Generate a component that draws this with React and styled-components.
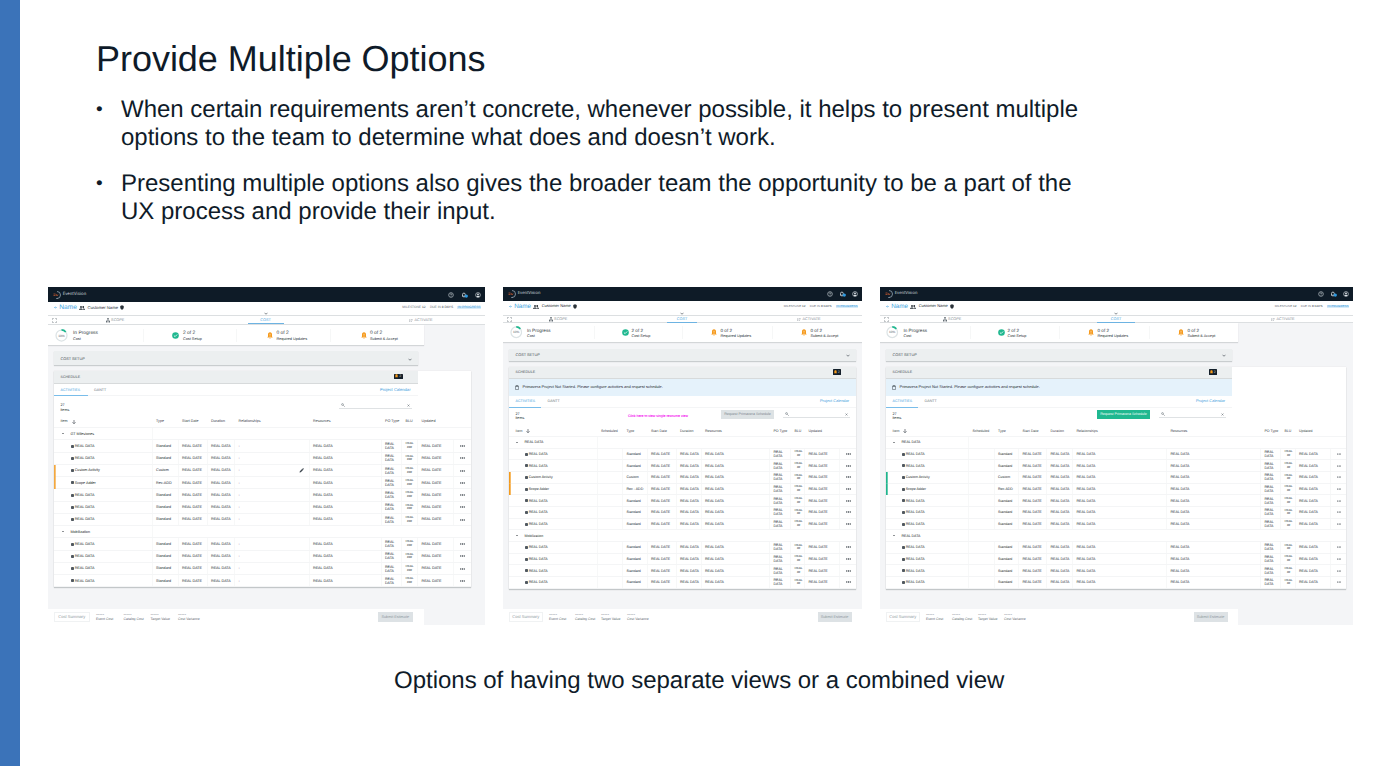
import React from "react";
import styled, { createGlobalStyle, css } from "styled-components";

const Global = createGlobalStyle`
  * { box-sizing: border-box; }
  body { margin: 0; background: #fff; }
`;

const Slide = styled.main`
  display: flex;
  width: 1400px;
  height: 766px;
  overflow: hidden;
  font-family: "Liberation Sans", Arial, sans-serif;
  color: #0f1b29;
  text-rendering: geometricPrecision;
`;
const Accent = styled.div`
  flex: none;
  width: 20px;
  background: #3b73b9;
`;
const Content = styled.div`
  flex: 1;
  display: flex;
  flex-direction: column;
`;
const Title = styled.h1`
  margin: 38px 0 0 76px;
  font-size: 36px;
  font-weight: 400;
  line-height: 42px;
  letter-spacing: -0.03px;
  white-space: nowrap;
`;
const Bullets = styled.ul`
  list-style: none;
  margin: 16px 0 0 76px;
  padding: 0;
  display: grid;
  gap: 18px;
  height: 191px;
  align-content: start;
`;
const Bullet = styled.li`
  display: grid;
  grid-template-columns: 25px 1fr;
  font-size: 24px;
  line-height: 28px;
`;
const Disc = styled.span`
  font-size: 19px;
  line-height: 27px;
`;
const Line = styled.span`
  display: block;
  white-space: nowrap;
  letter-spacing: -0.008px;
`;
const Gallery = styled.section`
  display: flex;
  gap: 18px;
  padding-left: 28px;
  height: 338px;
`;
const Caption = styled.p`
  margin: 42px 0 0 374px;
  font-size: 24px;
  line-height: 28px;
  letter-spacing: -0.012px;
  white-space: nowrap;
`;

/* ---------- application mock-up ---------- */

const Frame = styled.article`
  width: ${(p) => p.$w}px;
  height: 338px;
  background: #f4f5f7;
  color: #232c33;
  font-size: ${(p) => p.$fs}px;
  display: flex;
  flex-direction: column;
  overflow: hidden;
  white-space: nowrap;
  line-height: 1.2;
`;
const TopBar = styled.header`
  height: ${(p) => p.$h}px;
  flex: none;
  background: #0e1b27;
  display: flex;
  align-items: center;
  padding: 0 4.5px 0 5px;
  gap: 2.2px;
  color: #dfe5ea;
`;
const Brand = styled.span`
  font-family: Roboto, sans-serif;
  font-size: ${(p) => p.$fs}px;
  color: #c3cbd2;
  flex: 1;
`;
const TopIcons = styled.div`
  display: flex;
  gap: ${(p) => p.$gap}px;
`;
const NameBar = styled.div`
  height: ${(p) => p.$h}px;
  flex: none;
  background: #fff;
  border-bottom: 1px solid #dcdfe1;
  display: grid;
  grid-template-columns: 1fr 8px 1fr;
  padding: 0 4px;
`;
const NameLeft = styled.div`
  display: flex;
  align-items: center;
  height: 11px;
  gap: 2.3px;
  padding-left: 1.5px;
  svg { flex: none; }
`;
const BigName = styled.span`
  color: #3a9fe0;
  font-size: ${(p) => p.$fs}px;
  margin-left: 0.5px;
`;
const Customer = styled.span`
  color: #20282f;
  font-size: ${(p) => p.$fs}px;
`;
const ChevronSlot = styled.div`
  display: flex;
  align-items: flex-end;
  justify-content: center;
  padding-right: 1px;
`;
const NameRight = styled.div`
  display: flex;
  justify-content: flex-end;
  align-items: center;
  height: 11px;
  gap: 4.3px;
  font-size: ${(p) => p.$fs}px;
  color: #6b747b;
  b { color: #2f383f; font-weight: 400; }
`;
const Progress = styled.span`
  background: #d7ecfa;
  color: #3a9bdb;
  padding: 0 0.5px;
`;
const TabBar = styled.nav`
  height: ${(p) => p.$h}px;
  flex: none;
  background: #fff;
  border-bottom: 1px solid #dcdfe1;
  display: grid;
  grid-template-columns: ${(p) => p.$cols};
  font-size: 3.8px;
  color: #858e95;
`;
const NavTab = styled.div`
  display: flex;
  justify-content: center;
  align-items: center;
  gap: 1.5px;
  padding-top: ${(p) => p.$pt}px;
`;
const NavActive = styled.div`
  justify-self: center;
  width: ${(p) => p.$w}px;
  display: flex;
  align-items: center;
  justify-content: center;
  color: #4ba4dd;
  border-bottom: 1px solid #6db3e2;
  padding-top: ${(p) => p.$pt + 1}px;
`;
const Status = styled.div`
  height: ${(p) => p.$h}px;
  flex: none;
  width: ${(p) => p.$w}px;
  background: #fff;
  box-shadow: 0 1px 1px #d3d6d8;
  display: grid;
  grid-template-columns: ${(p) => p.$cols};
  align-items: center;
`;
const StatusCell = styled.div`
  display: flex;
  align-items: center;
  gap: ${(p) => p.$gap}px;
  padding-left: ${(p) => p.$pad}px;
  height: ${(p) => (p.$first ? 15 : 13)}px;
  ${(p) => !p.$first && css`border-left: 1px solid #f6f7f7;`}
  svg { flex: none; }
`;
const StatusText = styled.div`
  font-size: ${(p) => p.$fs}px;
  line-height: 5.5px;
  padding-top: ${(p) => p.$pt}px;
  color: #343d44;
  small { display: block; font-size: 3.8px; color: #232c33; }
`;
const panel = css`
  width: ${(p) => p.$w}px;
  height: ${(p) => p.$h}px;
  display: flex;
  align-items: center;
  justify-content: space-between;
  background: #eceff0;
  color: #424b51;
  padding-left: 6.5px;
  font-size: ${(p) => p.$fs}px;
`;
const SetupPanel = styled.div`
  ${panel}
  flex: none;
  margin: ${(p) => p.$mt}px 0 ${(p) => p.$mb}px 6px;
  padding-right: 6px;
  padding-top: ${(p) => p.$pt}px;
  box-shadow: 0 1px 1px #c9cdcf;
`;
const ScheduleHead = styled.div`
  ${panel}
  padding-right: 15px;
  border-bottom: 1px solid #d7dadb;
`;
const Badge = styled.span`
  width: 8.5px;
  height: 5.5px;
  margin-bottom: 1px;
  border-radius: 0.5px;
  background: #131f2a;
  display: flex;
  align-items: center;
  justify-content: center;
  gap: 1px;
  color: #c3cad0;
  font-size: 3.5px;
`;
const Card = styled.section`
  flex: none;
  width: ${(p) => p.$w}px;
  margin-left: 6px;
  background: #fff;
  box-shadow: 0 1px 1px #c3c7c9, 0 0 1px #d8dbdd;
`;
const Banner = styled.div`
  width: ${(p) => p.$w}px;
  height: 17px;
  background: #e5f2fb;
  display: flex;
  align-items: center;
  padding-left: 5.5px;
  gap: 4px;
  font-size: 3.96px;
  color: #1f2930;
`;
const SubTabs = styled.div`
  width: ${(p) => p.$w}px;
  height: ${(p) => p.$h}px;
  display: flex;
  border-bottom: 1px solid #f4f5f6;
  font-size: 3.6px;
  color: #6b747b;
`;
const SubTab = styled.span`
  display: flex;
  align-items: center;
  padding: 0 6.5px;
  height: ${(p) => p.$h}px;
  width: ${(p) => p.$w}px;
  ${(p) => p.$on && css`color: #3a9bdb; border-bottom: 1px solid #79bdea; padding-top: 1px;`}
`;
const CalendarLink = styled.span`
  margin-left: auto;
  align-self: center;
  padding: 1px 7px 0 0;
  color: #3a9bdb;
  font-size: ${(p) => p.$fs}px;
`;
const Tools = styled.div`
  width: ${(p) => p.$w}px;
  height: ${(p) => p.$h}px;
  display: flex;
  align-items: flex-start;
  padding: ${(p) => p.$pt}px 6px 0 6.5px;
`;
const Count = styled.div`
  flex: 1;
  font-size: 3.7px;
  line-height: 4.2px;
  margin-top: ${(p) => p.$mt}px;
`;
const Hint = styled.span`
  color: #f51ff0;
  font-size: 3.5px;
  -webkit-text-stroke: 0.1px #f51ff0;
  margin: 4px 33px 0 0;
`;
const RequestButton = styled.span`
  width: 53px;
  height: 9px;
  display: flex;
  align-items: center;
  justify-content: center;
  margin-right: 9px;
  font-size: 3.6px;
  background: ${(p) => (p.$on ? "#20b890" : "#dde2e4")};
  color: ${(p) => (p.$on ? "#f2fffb" : "#7f898f")};
`;
const Search = styled.span`
  width: ${(p) => p.$w}px;
  height: 8px;
  border-bottom: 1px solid #dfe2e4;
  display: flex;
  align-items: center;
  justify-content: space-between;
  padding: 1px 2px 0;
`;
const HeadRow = styled.div`
  display: grid;
  grid-template-columns: ${(p) => p.$cols};
  height: ${(p) => p.$h}px;
  align-items: center;
  border-bottom: 1px solid #f4f5f6;
  color: #3a434a;
`;
const HeadCell = styled.span`
  padding-left: ${(p) => p.$pad ?? 4}px;
  display: flex;
  align-items: center;
  gap: 4px;
`;
const Row = styled.div`
  display: grid;
  grid-template-columns: ${(p) => p.$cols};
  height: ${(p) => p.$h}px;
  border-bottom: 1px solid ${(p) => (p.$mark ? "transparent" : "#f4f5f6")};
  ${(p) => p.$mark && css`
    background:
      linear-gradient(${p.$mark}, ${p.$mark}) left / 1.7px 100% no-repeat border-box,
      linear-gradient(#f4f5f6, #f4f5f6) bottom / 100% 1px no-repeat border-box;
  `}
`;
const Cell = styled.span`
  display: flex;
  align-items: center;
  padding-left: 3.5px;
  border-left: 1px solid #f7f8f8;
  margin-left: -0.5px;
  padding-right: 5px;
  justify-content: space-between;
`;
const NameCell = styled.span`
  display: flex;
  align-items: center;
  gap: 0.7px;
  padding-left: ${(p) => p.$pad}px;
  color: #181f26;
`;
const GroupCell = styled(NameCell)`
  gap: 7px;
`;
const Square = styled.i`
  width: 3px;
  height: 3px;
  border-radius: 0.8px;
  background: #50585f;
`;
const Triangle = styled.i`
  border: 1.3px solid transparent;
  border-top: 1.8px solid #20282f;
  border-bottom: 0;
`;
const Stack = styled.span`
  line-height: ${(p) => (p.$small ? 3.6 : 4)}px;
  text-align: ${(p) => (p.$small ? "center" : "left")};
  font-size: ${(p) => (p.$small ? 3.1 : 3.55)}px;
  small { display: block; font-size: 3px; }
`;
const DotsCell = styled(Cell)`
  padding-left: 5.5px;
`;
const Footer = styled.footer`
  margin-top: auto;
  flex: none;
  height: 16px;
  width: ${(p) => p.$w}px;
  background: #fff;
  display: flex;
  padding: 3px 10.5px 0 6px;
  font-size: 3.6px;
  color: #8f989e;
`;
const SummaryButton = styled.span`
  width: ${(p) => p.$w}px;
  height: 10px;
  border: 1px solid #f0f2f3;
  display: flex;
  align-items: center;
  justify-content: center;
  font-size: ${(p) => p.$fs}px;
  margin-right: 6.5px;
`;
const Metric = styled.span`
  width: ${(p) => p.$w}px;
  line-height: 4px;
  padding-top: 1.5px;
  color: #626b72;
  font-size: 3.5px;
  small { display: block; font-size: 4.8px; line-height: 3px; color: #59626a; }
`;
const Submit = styled.span`
  margin-left: auto;
  width: ${(p) => p.$w}px;
  height: 9.5px;
  padding-top: 1px;
  background: #dde2e5;
  color: #8f999f;
  display: flex;
  align-items: center;
  justify-content: center;
  font-size: 3.8px;
`;

/* ---------- icons ---------- */

const Logo = () => (
  <svg width="7.5" height="8" viewBox="0 0 15 16" fill="none">
    <path d="M8 1a7 7 0 0 1 0 14" stroke="#9fb0bd" strokeWidth="1.5" />
    <path d="M6 15a7 7 0 0 0 3 0" stroke="#9fb0bd" strokeWidth="1.5" />
    <path d="M1 6h4M1 9h4M6 6l2 4 2-3" stroke="#b5532e" strokeWidth="1.6" />
  </svg>
);
const Help = () => (
  <svg width="6" height="6" viewBox="0 0 12 12" fill="none" stroke="#cfd6db" strokeWidth="1.2">
    <circle cx="6" cy="6" r="4.7" />
    <path d="M4.5 5a1.5 1.5 0 1 1 2 1.4L6 7M6 8v1" />
  </svg>
);
const Bell = () => (
  <svg width="7" height="6" viewBox="0 0 14 12" fill="none">
    <path d="M2 8.5h7M3 8V5a2.8 2.8 0 0 1 5.6 0v3M5 10h2" stroke="#e3e8ec" strokeWidth="1.5" />
    <circle cx="10.5" cy="8.2" r="3.4" fill="#2f9ae0" />
  </svg>
);
const User = () => (
  <svg width="6" height="6" viewBox="0 0 12 12">
    <circle cx="6" cy="6" r="4.8" fill="none" stroke="#dfe5ea" strokeWidth="1.2" />
    <circle cx="6" cy="4.8" r="1.8" fill="#dfe5ea" />
    <path d="M2.8 9c1-2 5.4-2 6.4 0a4.5 4.5 0 0 1-6.4 0z" fill="#dfe5ea" />
  </svg>
);
const Back = () => (
  <svg width="3" height="3" viewBox="0 0 6 6" fill="none" stroke="#4aa6e2">
    <path d="M6 3H1M3 1 1 3l2 2" />
  </svg>
);
const People = () => (
  <svg width="6" height="4" viewBox="0 0 12 8" fill="#232b32">
    <circle cx="4" cy="2" r="1.8" />
    <circle cx="8.5" cy="2" r="1.8" />
    <path d="M0 7.5V6.5C1 4.3 7 4.3 7.5 6.5v1zM8.3 7.5V5.5c0-1 3.200-.5 3.700 1v1z" />
  </svg>
);
const Pin = () => (
  <svg width="4" height="5" viewBox="0 0 8 10">
    <path d="M4 .5 7.5 2v3C7.5 7.5 5.5 9 4 9.5 2.5 9 .5 7.5.5 5V2z" fill="#2b333a" />
  </svg>
);
const Chevron = () => (
  <svg width="4" height="3" viewBox="0 0 8 6" fill="none" stroke="#4f585e" strokeWidth="1.4">
    <path d="m1 1.500 3 3 3-3" />
  </svg>
);
const Expand = () => (
  <svg width="5" height="5" viewBox="0 0 10 10" fill="none" stroke="#6d767c">
    <path d="M1 3.500V1h2.500M6.500 1H9v2.500M9 6.500V9H6.500M3.500 9H1V6.500" />
  </svg>
);
const ScopeIcon = () => (
  <svg width="4" height="4.5" viewBox="0 0 8 9" fill="#646d74">
    <path d="M2.500 0h3v3h-1v1.500H7V6h1v3H5V6h1v-.5H2V6h1v3H0V6h1V4.500h2.500V3h-1z" />
  </svg>
);
const ActivateIcon = () => (
  <svg width="3.5" height="3.5" viewBox="0 0 7 7" fill="none" stroke="#8d969c" strokeWidth=".8">
    <path d="M3 1H1v5h4V4M3 4l3-3M4 .7h2.400V3" />
  </svg>
);
const Ring = ({ size }) => (
  <svg width={size} height={size} viewBox="0 0 26 26" fill="none">
    <circle cx="13" cy="13" r="11" stroke="#dce3e5" strokeWidth="2.5" />
    <path d="M13 2a11 11 0 0 1 8.5 4" stroke="#20b890" strokeWidth="3.5" />
    <text x="13" y="15.500" fontSize="6.500" textAnchor="middle" fill="#59626a">10%</text>
  </svg>
);
const Check = () => (
  <svg width="7" height="7" viewBox="0 0 14 14">
    <circle cx="7" cy="7" r="6.6" fill="#20b890" />
    <path d="m3.8 7 2.3 2.3 4.2-4.3" fill="none" stroke="#fff" strokeWidth="1.6" />
  </svg>
);
const Alert = () => (
  <svg width="6" height="7" viewBox="0 0 12 14">
    <path d="M6 .5c2.8 0 4 2 4 4.500v4l1.500 2H.5L2 9V5C2 2.500 3.200.5 6 .5zM4.500 12h3L6 13.500z" fill="#f69a1c" />
    <path d="M6 3.500v3.700M6 8.200v1.300" stroke="#fff" strokeWidth="1.1" />
  </svg>
);
const MiniAlert = () => (
  <svg width="3" height="4" viewBox="0 0 6 8" fill="#f69a1c">
    <path d="M3 .5c1.700 0 2.300 1 2.300 2.500v2.500l.7 1H0l.7-1V3C.7 1.500 1.300.5 3 .5z" />
  </svg>
);
const Clipboard = () => (
  <svg width="4" height="5" viewBox="0 0 8 10" fill="none" stroke="#3c464e">
    <path d="M1 2h6v7H1zM2.500 1h3v2h-3z" />
  </svg>
);
const Glass = () => (
  <svg width="4" height="4" viewBox="0 0 8 8" fill="none" stroke="#59626a">
    <circle cx="3" cy="3" r="1.8" />
    <path d="m4.500 4.500 3 3" />
  </svg>
);
const Cross = () => (
  <svg width="3" height="3" viewBox="0 0 6 6" stroke="#59626a">
    <path d="m1 1 4 4M5 1 1 5" />
  </svg>
);
const ArrowDown = () => (
  <svg width="4" height="4" viewBox="0 0 8 8" fill="none" stroke="#2f383f" strokeWidth="1.2">
    <path d="M4 0v7M1 4.500l3 3 3-3" />
  </svg>
);
const Pencil = () => (
  <svg width="5" height="5" viewBox="0 0 10 10" fill="#3f4850">
    <path d="m1 9 .7-2.700L6.500 1.500l2 2-4.800 4.800zM7 1l1-1 2 2-1 1z" />
  </svg>
);
const More = () => (
  <svg width="5" height="2" viewBox="0 0 10 4" fill="#2f383f">
    <circle cx="1.5" cy="2" r="1.3" />
    <circle cx="5" cy="2" r="1.3" />
    <circle cx="8.5" cy="2" r="1.3" />
  </svg>
);

/* ---------- data ---------- */

const px = (list) => list.map((n) => `${n}px`).join(" ");

const SCREENS = [
  {
    w: 437, fs: 3.7, bar: 15, name: 14.3, tab: 8.5, status: 20.5, brand: 4.5, big: 6.6, customer: 4.2,
    iconGap: 6.8, nav: [12, 110, 191, 120], active: 36, navPad: 1, right: 3.25,
    statusW: 375.5, statusCols: [94.5, 93, 94, 94], ring: 13, statusText: 4.9, textPad: 3.6,
    pads: [6.5, 28.5, 30, 30], gaps: [5.5, 4, 4, 3.5],
    inner: 363.5, card: 416.5, setup: [6, 13.5, 6], head: 13.2, setupPad: 2,
    subH: 12.5, sub1: 33.5, tools: [19.7, 5, 2], search: 73, headH: 12, rowH: 12.25,
    cols: [98, 26, 29, 27.5, 74.5, 72, 20.5, 16, 36, 17],
    heads: ["Type", "Start Date", "Duration", "Relationships", "Resources", "PO Type", "BLU", "Updated"],
    kinds: ["type", "date", "data", "dash", "data", "po", "blu", "date", "dots"],
    groups: ["GT Milestones", "Mobilization"], adder: "Rec-ADD", mark: "#f3a83f", unit: "###",
    namePad: 17, groupPad: 7.5, footer: 375.5, sum: 35.5, metrics: [27.5, 27, 27.5, 27], submit: 35.5, calendar: 4.1,
  },
  {
    w: 359, fs: 3.54, bar: 14, name: 14.5, tab: 7.5, status: 19, brand: 4.35, big: 6.3, customer: 4,
    iconGap: 6, nav: [12, 86, 162, 92], active: 30, navPad: 0.5, right: 3.05,
    statusW: 359, statusCols: [91, 87.5, 90, 90.5], ring: 12.5, statusText: 4.6, textPad: 2,
    pads: [6.5, 26.5, 28, 28], gaps: [5, 3, 4, 4],
    inner: 347, card: 347, setup: [7, 12, 6], head: 11.5, setupPad: 0, banner: true,
    subH: 12, sub1: 32, tools: [18, 2.5, 2], search: 67, headH: 11.5, rowH: 11.68,
    cols: [88, 25.5, 24.5, 29, 25, 68.5, 21, 14, 35, 16.5],
    heads: ["Scheduled", "Type", "Start Date", "Duration", "Resources", "PO Type", "BLU", "Updated"],
    kinds: ["blank", "type", "date", "data", "data", "po", "blu", "date", "dots"],
    groups: ["REAL DATA", "Mobilization"], adder: "Rec - ADD", mark: "#f39a1c", unit: "##",
    namePad: 16, groupPad: 6.5, footer: 359, sum: 33.5, metrics: [26, 26, 26, 26], submit: 34, calendar: 3.9,
    hint: true,
  },
  {
    w: 473, fs: 3.54, bar: 14, name: 14.5, tab: 7.5, status: 19, brand: 4.35, big: 6.3, customer: 4,
    iconGap: 6, nav: [12, 120, 208, 126], active: 38, navPad: 0.5, right: 3.05,
    statusW: 358, statusCols: [89.5, 89, 90, 89.5], ring: 12.5, statusText: 4.6, textPad: 2,
    pads: [6, 27, 28, 28], gaps: [5, 3, 4, 4],
    inner: 346, card: 460, setup: [7, 12, 6], head: 11.5, setupPad: 0, banner: true,
    subH: 12, sub1: 32, tools: [18, 2.5, 2], search: 67, headH: 11.5, rowH: 11.68,
    cols: [82.5, 25.5, 24.5, 28, 26, 94, 94, 20, 14.5, 35.5, 15.5],
    heads: ["Scheduled", "Type", "Start Date", "Duration", "Relationships", "Resources", "PO Type", "BLU", "Updated"],
    kinds: ["blank", "type", "date", "data", "data", "data", "po", "blu", "data", "dots"],
    groups: ["REAL DATA", "REAL DATA"], adder: "Rec-ADD", mark: "#1fb58d", unit: "##",
    namePad: 16, groupPad: 6.5, footer: 358, sum: 33.5, metrics: [26, 26, 26, 26], submit: 34, calendar: 3.9,
    green: true,
  },
];

const STATUSES = [
  ["ring", "In Progress", "Cost"],
  ["check", "2 of 2", "Cost Setup"],
  ["alert", "0 of 2", "Required Updates"],
  ["alert", "0 of 2", "Submit & Accept"],
];
const ITEMS = [
  [null, null, "Custom Activity", "Scope Adder", null, null, null],
  [null, null, null, null],
];

function DataCell({ kind, item, screen }) {
  if (kind === "dots") return <DotsCell><More /></DotsCell>;
  if (kind === "po") return <Cell><Stack>REAL<br />DATA</Stack></Cell>;
  if (kind === "blu") return <Cell><Stack $small>REAL<small>{screen.unit}</small></Stack></Cell>;
  let text = { blank: "", dash: "-", date: "REAL DATE", data: "REAL DATA" }[kind];
  if (kind === "type") {
    text = item === "Custom Activity" ? "Custom" : item === "Scope Adder" ? screen.adder : "Standard";
  }
  return (
    <Cell>
      {text}
      {kind === "dash" && item === "Custom Activity" && <Pencil />}
    </Cell>
  );
}

function Screen({ screen: s }) {
  const cols = px(s.cols);
  return (
    <Frame $w={s.w} $fs={s.fs}>
      <TopBar $h={s.bar}>
        <Logo />
        <Brand $fs={s.brand}>EventVision</Brand>
        <TopIcons $gap={s.iconGap}><Help /><Bell /><User /></TopIcons>
      </TopBar>
      <NameBar $h={s.name}>
        <NameLeft>
          <Back />
          <BigName $fs={s.big}>Name</BigName>
          <People />
          <Customer $fs={s.customer}>Customer Name</Customer>
          <Pin />
        </NameLeft>
        <ChevronSlot><Chevron /></ChevronSlot>
        <NameRight $fs={s.right}>
          <span>MILESTONE <b>12</b></span>
          <span>DUE IN <b>8 DAYS</b></span>
          <Progress>IN PROGRESS</Progress>
        </NameRight>
      </NameBar>
      <TabBar $h={s.tab} $cols={px(s.nav)}>
        <NavTab $pt={s.navPad}><Expand /></NavTab>
        <NavTab $pt={s.navPad}><ScopeIcon />SCOPE</NavTab>
        <NavActive $pt={s.navPad} $w={s.active}>COST</NavActive>
        <NavTab $pt={s.navPad}><ActivateIcon />ACTIVATE</NavTab>
      </TabBar>
      <Status $h={s.status} $w={s.statusW} $cols={px(s.statusCols)}>
        {STATUSES.map(([icon, title, label], i) => (
          <StatusCell key={label} $first={i === 0} $pad={s.pads[i]} $gap={s.gaps[i]}>
            {icon === "ring" ? <Ring size={s.ring} /> : icon === "check" ? <Check /> : <Alert />}
            <StatusText $fs={s.statusText} $pt={s.textPad}>{title}<small>{label}</small></StatusText>
          </StatusCell>
        ))}
      </Status>
      <SetupPanel $w={s.inner} $mt={s.setup[0]} $h={s.setup[1]} $mb={s.setup[2]} $fs={3.8} $pt={s.setupPad}>
        COST SETUP<Chevron />
      </SetupPanel>
      <Card $w={s.card}>
        <ScheduleHead $w={s.inner} $h={s.head} $fs={3.6}>
          SCHEDULE
          <Badge><MiniAlert />2</Badge>
        </ScheduleHead>
        {s.banner && (
          <Banner $w={s.inner}>
            <Clipboard />
            Primavera Project Not Started. Please configure activities and request schedule.
          </Banner>
        )}
        <SubTabs $w={s.inner} $h={s.subH}>
          <SubTab $on $h={s.subH} $w={s.sub1}>ACTIVITIES</SubTab>
          <SubTab $h={s.subH}>GANTT</SubTab>
          <CalendarLink $fs={s.calendar}>Project Calendar</CalendarLink>
        </SubTabs>
        <Tools $w={s.inner} $h={s.tools[0]} $pt={s.tools[1]}>
          <Count $mt={s.tools[2]}>27<br />items</Count>
          {s.hint && <Hint>Click here to view single resource view</Hint>}
          {s.banner && <RequestButton $on={s.green}>Request Primavera Schedule</RequestButton>}
          <Search $w={s.search}><Glass /><Cross /></Search>
        </Tools>
        <HeadRow $cols={cols} $h={s.headH}>
          <HeadCell $pad={6.5}>Item<ArrowDown /></HeadCell>
          {s.heads.map((h) => <HeadCell key={h}>{h}</HeadCell>)}
        </HeadRow>
        {s.groups.map((group, g) => (
          <React.Fragment key={g}>
            <Row $cols={cols} $h={s.rowH}>
              <GroupCell $pad={s.groupPad}><Triangle />{group}</GroupCell>
              <Cell />
            </Row>
            {ITEMS[g].map((item, i) => (
              <Row key={i} $cols={cols} $h={s.rowH} $mark={item ? s.mark : null}>
                <NameCell $pad={s.namePad}><Square />{item || "REAL DATA"}</NameCell>
                {s.kinds.map((kind, k) => <DataCell key={k} kind={kind} item={item} screen={s} />)}
              </Row>
            ))}
          </React.Fragment>
        ))}
      </Card>
      <Footer $w={s.footer}>
        <SummaryButton $w={s.sum} $fs={4.1}>Cost Summary</SummaryButton>
        {["Event Cost", "Catalog Cost", "Target Value", "Cost Variance"].map((m, i) => (
          <Metric key={m} $w={s.metrics[i]}><small>-----</small>{m}</Metric>
        ))}
        <Submit $w={s.submit}>Submit Estimate</Submit>
      </Footer>
    </Frame>
  );
}

export default function App() {
  return (
    <Slide>
      <Global />
      <Accent />
      <Content>
        <Title>Provide Multiple Options</Title>
        <Bullets>
          <Bullet>
            <Disc>•</Disc>
            <div>
              <Line>When certain requirements aren’t concrete, whenever possible, it helps to present multiple</Line>
              <Line>options to the team to determine what does and doesn’t work.</Line>
            </div>
          </Bullet>
          <Bullet>
            <Disc>•</Disc>
            <div>
              <Line>Presenting multiple options also gives the broader team the opportunity to be a part of the</Line>
              <Line>UX process and provide their input.</Line>
            </div>
          </Bullet>
        </Bullets>
        <Gallery>
          {SCREENS.map((screen, i) => <Screen key={i} screen={screen} />)}
        </Gallery>
        <Caption>Options of having two separate views or a combined view</Caption>
      </Content>
    </Slide>
  );
}
